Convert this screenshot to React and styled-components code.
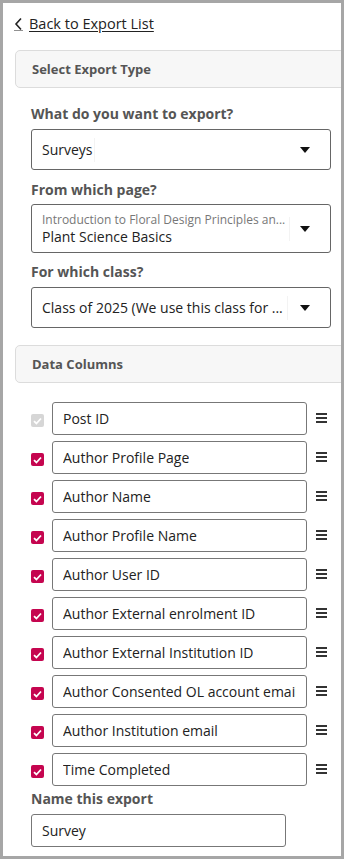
import React from 'react';
import styled, { createGlobalStyle } from 'styled-components';

const GlobalStyle = createGlobalStyle`
  html, body { margin: 0; padding: 0; background: #fff; }
  body { font-family: "Open Sans", "Liberation Sans", sans-serif; color: #222; }
`;

const Frame = styled.div`
  width: 344px;
  height: 859px;
  box-sizing: border-box;
  border: 3px solid #a6a6a6;
  overflow: hidden;
  padding-top: 11px;
  background: #fff;
`;

const BackLink = styled.a`
  display: flex;
  align-items: center;
  gap: 6px;
  margin-left: 11px;
  font-size: 14.5px;
  line-height: 20px;
  color: #222;
  text-decoration: none;
  span { text-decoration: underline; text-underline-offset: 2px; }
`;

const SectionHeader = styled.div`
  margin: ${p => p.$top}px -12px 0 12px;
  height: 38px;
  box-sizing: border-box;
  border: 1px solid #dcdcdc;
  border-radius: 5px;
  background: #f7f7f7;
  display: flex;
  align-items: center;
  padding-left: 16px;
  font-size: 13px;
  font-weight: 700;
  color: #555;
`;

const Form = styled.div`
  padding: 0 10px 0 28px;
  display: flex;
  flex-direction: column;
`;

const Label = styled.div`
  margin-top: ${p => p.$top}px;
  font-size: 14px;
  line-height: 20px;
  font-weight: 700;
  color: #555;
`;

const Select = styled.div`
  margin-top: ${p => p.$top}px;
  height: ${p => p.$h}px;
  box-sizing: border-box;
  border: 1px solid #666;
  border-radius: 3px;
  display: flex;
  align-items: center;
  padding: 0 20px 0 10px;
`;

const ValueWrap = styled.div`
  flex: 1;
  min-width: 0;
  display: flex;
  align-items: center;
`;

const ValueText = styled.div`
  display: flex;
  flex-direction: column;
  min-width: 0;
  max-width: 250px;
`;

const Sub = styled.div`
  font-size: 12px;
  line-height: 15px;
  color: #777;
  white-space: nowrap;
`;

const Main = styled.div`
  font-size: 14px;
  line-height: 19px;
  color: #222;
  white-space: nowrap;
`;

const Sep = styled.div`
  width: 1px;
  height: 24px;
  background: #f3f3f3;
  margin-left: ${p => p.$gap}px;
`;

const Caret = styled.div`
  width: 0;
  height: 0;
  border-left: 5px solid transparent;
  border-right: 5px solid transparent;
  border-top: 6px solid #111;
  margin-top: 1px;
`;

const Rows = styled.div`
  margin-top: 19px;
  display: flex;
  flex-direction: column;
  gap: 6px;
`;

const Row = styled.div`
  display: flex;
  align-items: center;
  height: 33px;
`;

const Check = styled.div`
  width: 13px;
  height: 13px;
  border-radius: 2px;
  background: ${p => (p.$disabled ? '#d6d6d6' : '#c5054f')};
  display: flex;
  align-items: center;
  justify-content: center;
  margin: 4px 8px 0 0;
`;

const ColInput = styled.div`
  width: 255px;
  height: 33px;
  box-sizing: border-box;
  border: 1px solid #777;
  border-radius: 3px;
  padding: 0 10px;
  display: flex;
  align-items: center;
  font-size: 14px;
  color: #222;
  span {
    white-space: nowrap;
    overflow: hidden;
    min-width: 0;
  }
`;

const Handle = styled.div`
  margin: 0 0 2px 9px;
  width: 11px;
  display: flex;
  flex-direction: column;
  gap: 2px;
  i { display: block; height: 2px; background: #333; }
`;

const NameInput = styled.div`
  margin-top: 5px;
  width: 255px;
  height: 33px;
  box-sizing: border-box;
  border: 1px solid #777;
  border-radius: 3px;
  padding: 0 10px;
  display: flex;
  align-items: center;
  font-size: 14px;
  color: #222;
`;

const columns = [
  { name: 'Post ID', disabled: true },
  { name: 'Author Profile Page' },
  { name: 'Author Name' },
  { name: 'Author Profile Name' },
  { name: 'Author User ID' },
  { name: 'Author External enrolment ID' },
  { name: 'Author External Institution ID' },
  { name: 'Author Consented OL account email' },
  { name: 'Author Institution email' },
  { name: 'Time Completed' },
];

const Tick = () => (
  <svg width="9" height="8" viewBox="0 0 9 8">
    <path d="M1 4.2 L3.4 6.5 L8 1.5" fill="none" stroke="#fff" strokeWidth="1.8" />
  </svg>
);

const App = () => {
  return (
    <Frame>
      <GlobalStyle />
      <BackLink href="#">
        <svg width="9" height="14" viewBox="0 0 9 14">
          <path d="M7 1.5 L2 7 L7 12.5" fill="none" stroke="#222" strokeWidth="1.6" />
          <path d="M0 14 H9" stroke="#222" strokeWidth="1" />
        </svg>
        <span>Back to Export List</span>
      </BackLink>

      <SectionHeader $top={16}>Select Export Type</SectionHeader>

      <Form>
        <Label $top={16}>What do you want to export?</Label>
        <Select $top={5} $h={41}>
          <ValueWrap>
            <ValueText><Main>Surveys</Main></ValueText>
            <Sep $gap={1} />
          </ValueWrap>
          <Caret />
        </Select>

        <Label $top={10}>From which page?</Label>
        <Select $top={4} $h={49}>
          <ValueWrap>
            <ValueText>
              <Sub>Introduction to Floral Design Principles an...</Sub>
              <Main>Plant Science Basics</Main>
            </ValueText>
            <Sep $gap={4} />
          </ValueWrap>
          <Caret />
        </Select>

        <Label $top={9}>For which class?</Label>
        <Select $top={5} $h={41}>
          <ValueWrap>
            <ValueText><Main>Class of 2025 (We use this class for ...</Main></ValueText>
            <Sep $gap={4} />
          </ValueWrap>
          <Caret />
        </Select>
      </Form>

      <SectionHeader $top={17}>Data Columns</SectionHeader>

      <Form>
        <Rows>
          {columns.map(c => (
            <Row key={c.name}>
              <Check $disabled={c.disabled}><Tick /></Check>
              <ColInput><span>{c.name}</span></ColInput>
              <Handle><i /><i /><i /></Handle>
            </Row>
          ))}
        </Rows>
        <Label $top={3}>Name this export</Label>
        <NameInput>Survey</NameInput>
      </Form>
    </Frame>
  );
};

export default App;
